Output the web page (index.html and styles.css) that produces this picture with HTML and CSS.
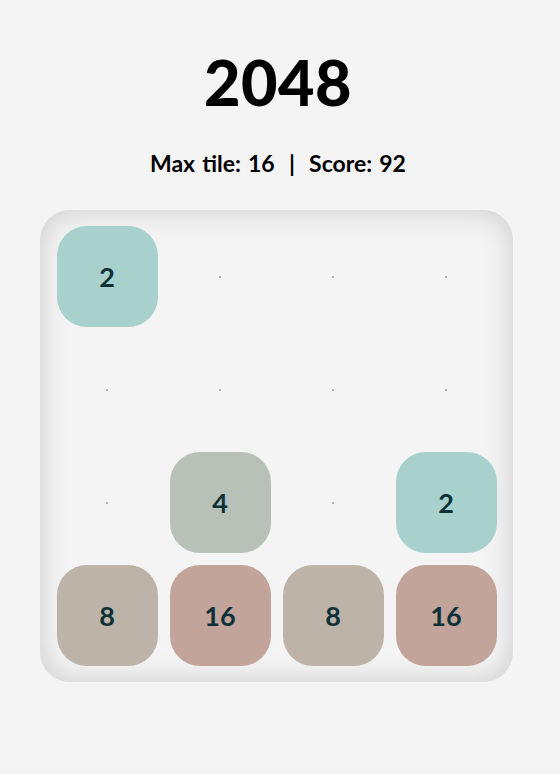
FILE: index.html
```html
<!DOCTYPE html>
<html>
<head>
<meta charset="utf-8">
<link rel="stylesheet" href="styles.css">
</head>
<body>
<main class="game">
  <h1 class="title">2048</h1>
  <p class="stats">Max tile: 16 &nbsp;|&nbsp; Score: 92</p>
  <div class="board">
    <div class="cell tile t2">2</div>
    <div class="cell"><span class="dot"></span></div>
    <div class="cell"><span class="dot"></span></div>
    <div class="cell"><span class="dot"></span></div>
    <div class="cell"><span class="dot"></span></div>
    <div class="cell"><span class="dot"></span></div>
    <div class="cell"><span class="dot"></span></div>
    <div class="cell"><span class="dot"></span></div>
    <div class="cell"><span class="dot"></span></div>
    <div class="cell tile t4">4</div>
    <div class="cell"><span class="dot"></span></div>
    <div class="cell tile t2">2</div>
    <div class="cell tile t8">8</div>
    <div class="cell tile t16">16</div>
    <div class="cell tile t8">8</div>
    <div class="cell tile t16">16</div>
  </div>
</main>
</body>
</html>
```
FILE: styles.css
```css
html, body {
  margin: 0;
  padding: 0;
  background: #f4f4f4;
}
body {
  font-family: Lato, "Noto Sans", sans-serif;
  color: #000;
}
.game {
  display: flex;
  flex-direction: column;
  align-items: center;
  padding-top: 46px;
}
.title {
  margin: 0 0 0 -4px;
  font-size: 63px;
  line-height: 72px;
  font-weight: 900;
  letter-spacing: 0.5px;
}
.stats {
  margin: 31px 0 0 -4px;
  font-size: 23px;
  line-height: 28px;
  font-weight: 700;
  word-spacing: 1.5px;
}
.board {
  margin: 33px 0 0 -8px;
  width: 473px;
  height: 472px;
  box-sizing: border-box;
  padding: 16px 16px 16px 17px;
  border-radius: 30px;
  background: #f4f4f4;
  box-shadow: inset 0 0 30px rgba(0, 0, 0, 0.17);
  display: grid;
  grid-template-columns: repeat(4, 1fr);
  grid-template-rows: repeat(4, 1fr);
  gap: 12px;
}
.cell {
  display: flex;
  align-items: center;
  justify-content: center;
  border-radius: 30px;
}
.dot {
  width: 2px;
  height: 2px;
  border-radius: 50%;
  background: #999;
}
.tile {
  font-size: 27px;
  font-weight: 700;
  color: #0d3136;
}
.t2 { background: #a8d1cd; }
.t4 { background: #b8c1b8; }
.t8 { background: #beb3a8; }
.t16 { background: #c3a49a; }
```
